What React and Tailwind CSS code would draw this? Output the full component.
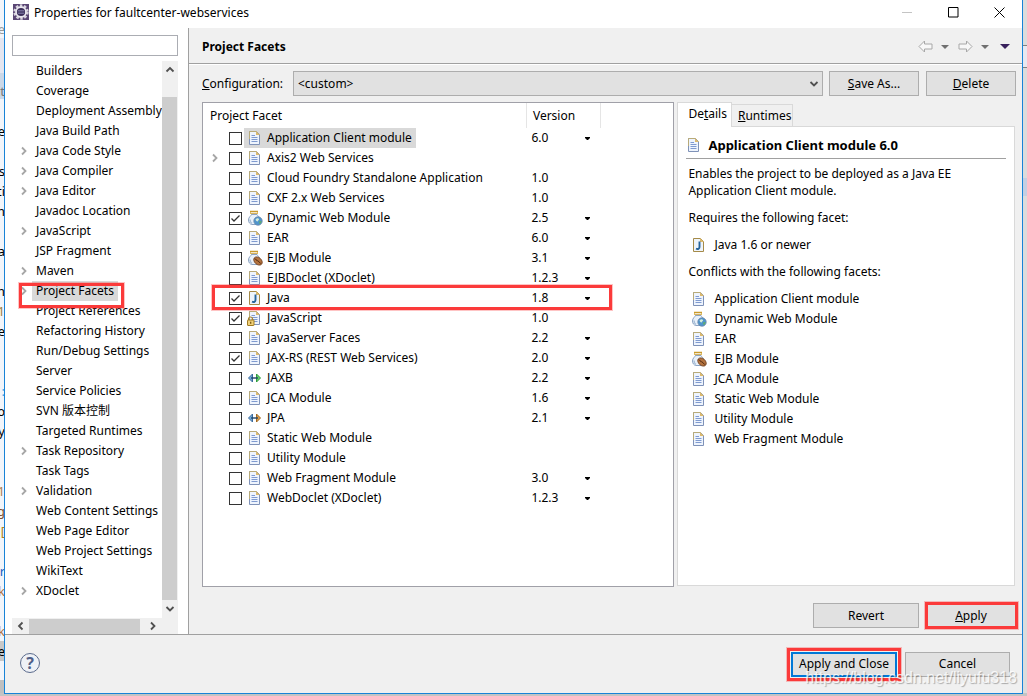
import { useState } from "react";

const PAGES = [
  { name: "Builders" },
  { name: "Coverage" },
  { name: "Deployment Assembly" },
  { name: "Java Build Path" },
  { name: "Java Code Style", children: true },
  { name: "Java Compiler", children: true },
  { name: "Java Editor", children: true },
  { name: "Javadoc Location" },
  { name: "JavaScript", children: true },
  { name: "JSP Fragment" },
  { name: "Maven", children: true },
  { name: "Project Facets", children: true, marked: true },
  { name: "Project References" },
  { name: "Refactoring History" },
  { name: "Run/Debug Settings" },
  { name: "Server" },
  { name: "Service Policies" },
  { name: "SVN 版本控制" },
  { name: "Targeted Runtimes" },
  { name: "Task Repository", children: true },
  { name: "Task Tags" },
  { name: "Validation", children: true },
  { name: "Web Content Settings" },
  { name: "Web Page Editor" },
  { name: "Web Project Settings" },
  { name: "WikiText" },
  { name: "XDoclet", children: true },
];

const FACETS = [
  { name: "Application Client module", version: "6.0", menu: true },
  { name: "Axis2 Web Services", children: true },
  { name: "Cloud Foundry Standalone Application", version: "1.0" },
  { name: "CXF 2.x Web Services", version: "1.0" },
  { name: "Dynamic Web Module", icon: "web", version: "2.5", menu: true, checked: true },
  { name: "EAR", version: "6.0", menu: true },
  { name: "EJB Module", icon: "ejb", version: "3.1", menu: true },
  { name: "EJBDoclet (XDoclet)", version: "1.2.3", menu: true },
  { name: "Java", icon: "java", version: "1.8", menu: true, checked: true, marked: true },
  { name: "JavaScript", icon: "locked", version: "1.0", checked: true },
  { name: "JavaServer Faces", version: "2.2", menu: true },
  { name: "JAX-RS (REST Web Services)", version: "2.0", menu: true, checked: true },
  { name: "JAXB", icon: "jaxb", version: "2.2", menu: true },
  { name: "JCA Module", version: "1.6", menu: true },
  { name: "JPA", icon: "jpa", version: "2.1", menu: true },
  { name: "Static Web Module" },
  { name: "Utility Module" },
  { name: "Web Fragment Module", version: "3.0", menu: true },
  { name: "WebDoclet (XDoclet)", version: "1.2.3", menu: true },
];

const CONFLICTS = [
  { name: "Application Client module" },
  { name: "Dynamic Web Module", icon: "web" },
  { name: "EAR" },
  { name: "EJB Module", icon: "ejb" },
  { name: "JCA Module" },
  { name: "Static Web Module" },
  { name: "Utility Module" },
  { name: "Web Fragment Module" },
];

// Pieces of the editor that show past the left edge of the dialog
const EDITOR_LINES = [
  { top: 21, text: "ce", color: "#999999" },
  { top: 83, text: "ct", color: "#777777" },
  { top: 123, text: "se", color: "#000000" },
  { top: 163, text: "s", color: "#000000" },
  { top: 183, text: "ti", color: "#000000" },
  { top: 203, text: "n", color: "#000000" },
  { top: 243, text: "a", color: "#000000" },
  { top: 283, text: "n", color: "#000000" },
  { top: 303, text: "1", color: "#a08040" },
  { top: 323, text: "e", color: "#000000" },
  { top: 383, text: ":", color: "#3aa0e0" },
  { top: 403, text: "o", color: "#000000" },
  { top: 423, text: "y", color: "#000000" },
  { top: 483, text: "1", color: "#b08050" },
  { top: 503, text: "ig", color: "#805030" },
  { top: 523, text: "[", color: "#b08020" },
  { top: 563, text: "r", color: "#2060c0" },
  { top: 583, text: "k", color: "#b07040" },
  { top: 623, text: "k", color: "#b07040" },
  { top: 643, text: "e", color: "#000000" },
];

function FileShape() {
  return (
    <>
      <path d="M2.5 1.5h7l3 3v10h-10z" fill="#eef4fd" stroke="#7f92b8" />
      <path d="M2.5 9V1.5h7" fill="none" stroke="#b9ab79" />
      <path d="M9 1l4 4H9z" fill="#dcb96c" />
      <path d="M4.5 5.5H8M4.5 7.5h6M4.5 9.5h6M4.5 11.5h6" stroke="#7f9ad0" fill="none" />
    </>
  );
}

function JarShape() {
  return (
    <>
      <path d="M3 1.5h8M4 4h6" stroke="#c99a2c" strokeWidth="1.6" fill="none" />
      <path d="M3.5 2v2M10.5 2v2" stroke="#dcb960" />
      <path d="M4.5 4.5C4 6 1.500 7 1.500 10c0 2.500 1.500 4 3 4.500h5.500c2-1 3-2.500 3-4.500 0-3-2.500-4-3-5.500z" fill="#e9f1fa" stroke="#8ba3c2" />
      <path d="M3 9.500c0 2 .8 3.300 2 4" stroke="#a9bfd8" strokeWidth="1.5" fill="none" />
    </>
  );
}

function FacetIcon({ type = "file" }) {
  return (
    <svg viewBox="0 0 16 16" className="h-4 w-4 shrink-0" aria-hidden="true">
      {type === "file" && <FileShape />}
      {type === "locked" && (
        <>
          <FileShape />
          <path d="M1.500 10.500V9a2 2 0 0 1 4 0v1.500" fill="none" stroke="#a8842c" strokeWidth="1.200" />
          <rect x="0.500" y="10" width="6.500" height="5.500" rx="0.500" fill="#f0d078" stroke="#a07a20" />
          <path d="M3.700 11.800v2" stroke="#705010" strokeWidth="1.200" />
        </>
      )}
      {type === "java" && (
        <>
          <path d="M2.5 1.5h7l3 3v10h-10z" fill="#eef4fb" stroke="#a58a48" />
          <path d="M9 1l4 4H9z" fill="#dcb96c" />
          <path d="M8.5 4.500v5.500c0 1.700-1.500 2.500-3.500 1.700" fill="none" stroke="#25649c" strokeWidth="1.9" />
        </>
      )}
      {type === "web" && (
        <>
          <JarShape />
          <circle cx="11" cy="11" r="4.200" fill="#4f94cc" stroke="#6b86a8" strokeWidth="0.8" />
          <path d="M8.500 9.500c1.500-2 3-1.500 3.500-.5s-1 1-1 2-2 .5-2.500-1.500z" fill="#d4ecd8" />
          <path d="M12 11.500l2.500-.5c0 1.500-.8 2.500-2 3z" fill="#5fae6a" />
        </>
      )}
      {type === "ejb" && (
        <>
          <JarShape />
          <ellipse cx="11" cy="11" rx="4.800" ry="3.400" transform="rotate(42 11 11)" fill="#b4733f" stroke="#6e3d1c" strokeWidth="0.8" />
          <path d="M8 8.500c1 2.500 3.500 1.500 5.500 5" fill="none" stroke="#522a10" />
        </>
      )}
      {(type === "jaxb" || type === "jpa") && (
        <>
          <path d="M5.500 4v8L1.500 8z" fill="#6fa8d8" stroke="#3a6a9c" strokeLinejoin="round" />
          <path
            d="M9.500 4v8l4-4z"
            fill={type === "jaxb" ? "#63d06a" : "#dc9c48"}
            stroke={type === "jaxb" ? "#2f9a3c" : "#a06820"}
            strokeLinejoin="round"
          />
          <path d="M4 8h7" stroke="#1f4468" strokeWidth="1.4" />
        </>
      )}
    </svg>
  );
}

function EclipseIcon() {
  return (
    <svg viewBox="0 0 16 16" className="h-4 w-4" aria-hidden="true">
      <rect width="16" height="16" fill="#5a4674" />
      <circle cx="8" cy="8" r="6.500" fill="none" stroke="#d8d4de" strokeWidth="2.400" strokeDasharray="2.500 1.600" />
      <circle cx="8" cy="8" r="5" fill="#3a2d58" stroke="#e9e6ee" strokeWidth="1.800" />
      <path d="M5 6.500h6M4.500 8h7M5 9.500h6" stroke="#7f78a4" strokeWidth="0.8" />
    </svg>
  );
}

function Chevron({ direction = "right", className = "" }) {
  const paths = {
    right: "M3 1.500L6.500 5L3 8.500",
    left: "M6.500 1.500L3 5L6.500 8.500",
    up: "M1.500 6.500L5 3L8.500 6.500",
    down: "M1.500 3L5 6.500L8.500 3",
  };
  return (
    <svg viewBox="0 0 10 10" className={`h-[10px] w-[10px] shrink-0 stroke-[1.8] ${className}`} aria-hidden="true">
      <path d={paths[direction]} fill="none" stroke="currentColor" />
    </svg>
  );
}

function Caret() {
  return (
    <svg viewBox="0 0 8 4" className="h-1 w-2 text-[#707070]" aria-hidden="true">
      <path d="M0 0h8L4 4z" fill="currentColor" />
    </svg>
  );
}

function NavArrow({ flip }) {
  return (
    <svg viewBox="0 0 15 13" className={`h-[13px] w-[15px] ${flip ? "-scale-x-100" : ""}`} aria-hidden="true">
      <path d="M1 6.500L6.500 1v3H14v5H6.500v3z" fill="#f8f8f8" stroke="#a8a8a8" strokeLinejoin="round" />
    </svg>
  );
}

// Red frame drawn over the thing it points at
function Mark({ className }) {
  return (
    <span className={`pointer-events-none absolute z-10 border-[3px] border-[#fb3a3a] outline outline-[#fb3a3a]/30 ${className}`} />
  );
}

function DialogButton({ children, className = "" }) {
  return (
    <button type="button" className={`h-[25px] border border-[#adadad] bg-[#e1e1e1] whitespace-nowrap ${className}`}>
      {children}
    </button>
  );
}

function PageTree() {
  return (
    <nav className="flex w-[183px] shrink-0 flex-col bg-white pl-[7px] pt-[7px]">
      <input type="text" aria-label="Filter" className="h-[21px] w-[166px] shrink-0 border border-[#abadb3] bg-white px-1 outline-none" />
      <div className="mt-[5px] flex min-h-0 w-[166px] flex-1">
        <ul className="min-w-0 flex-1 overflow-hidden">
          {PAGES.map((page) => (
            <li key={page.name} className="relative flex h-5 items-center">
              <span className="flex w-5 shrink-0 pl-[7px]">
                {page.children && (
                  <button type="button" aria-label={`Expand ${page.name}`} className="text-[#a6a6a6]">
                    <Chevron />
                  </button>
                )}
              </span>
              <a href="#" className={`h-5 px-1 leading-5 whitespace-nowrap ${page.marked ? "bg-[#d9d9d9]" : ""}`}>
                {page.name}
              </a>
              {page.marked && <Mark className="left-[7px] top-0.5 h-[25px] w-[105px]" />}
            </li>
          ))}
        </ul>
        <div className="flex w-4 shrink-0 flex-col items-center bg-[#f0f0f0] text-[#505050]">
          <span className="flex h-9 w-full justify-center pt-1"><Chevron direction="up" /></span>
          <span className="mr-px w-[15px] flex-1 bg-[#cdcdcd]" />
          <span className="flex h-[18px] items-center"><Chevron direction="down" /></span>
        </div>
      </div>
      <div className="flex h-4 w-[166px] shrink-0 items-center bg-[#f0f0f0] pr-5 text-[#505050]">
        <span className="flex w-[17px] justify-center"><Chevron direction="left" /></span>
        <span className="h-[15px] w-[111px] bg-[#cdcdcd]" />
        <span className="flex flex-1 justify-end"><Chevron /></span>
      </div>
    </nav>
  );
}

function FacetTable() {
  const [checked, setChecked] = useState(() =>
    Object.fromEntries(FACETS.map((f) => [f.name, Boolean(f.checked)]))
  );

  return (
    <div className="min-w-0 flex-[471] border border-[#a0a0a8] bg-white">
      <table className="w-full table-fixed border-collapse">
        <colgroup>
          <col />
          <col className="w-[74px]" />
          <col className="w-[73px]" />
        </colgroup>
        <thead>
          <tr className="h-[25px] text-left">
            <th className="border-r border-[#e5e5e5] pl-[7px] font-normal">Project Facet</th>
            <th className="border-r border-[#e5e5e5] pl-1.5 font-normal">Version</th>
            <td />
          </tr>
        </thead>
        <tbody>
          {FACETS.map((facet, i) => (
            <tr key={facet.name} className="h-5">
              <td className="relative p-0">
                <div className="flex h-5 items-center">
                  <span className="flex w-[26px] shrink-0 pl-[7px]">
                    {facet.children && (
                      <button type="button" aria-label={`Expand ${facet.name}`} className="text-[#a6a6a6]">
                        <Chevron />
                      </button>
                    )}
                  </span>
                  <label className="flex h-5 items-center">
                    <span className="relative flex">
                      <input
                        type="checkbox"
                        checked={checked[facet.name]}
                        onChange={() => setChecked({ ...checked, [facet.name]: !checked[facet.name] })}
                        className="h-[13px] w-[13px] appearance-none border border-[#333333] bg-white"
                      />
                      {checked[facet.name] && (
                        <svg viewBox="0 0 13 13" className="pointer-events-none absolute inset-0 h-[13px] w-[13px]" aria-hidden="true">
                          <path d="M2.500 6.500L5 9L10.500 3.500" fill="none" stroke="#333333" strokeWidth="1.3" />
                        </svg>
                      )}
                    </span>
                    <span className={`ml-0.5 flex h-5 items-center gap-1 pl-[3px] pr-1 whitespace-nowrap ${i === 0 ? "bg-[#d9d9d9]" : ""}`}>
                      <FacetIcon type={facet.icon} />
                      {facet.name}
                    </span>
                  </label>
                </div>
                {facet.marked && <Mark className="left-[9px] top-[-3px] h-[25px] w-[400px]" />}
              </td>
              <td className="p-0 pl-[5px]">
                <div className="flex items-center justify-between pr-[10px]">
                  {facet.version}
                  {facet.menu && (
                    <button type="button" aria-label={`${facet.name} version`} className="flex h-4 items-center">
                      <svg viewBox="0 0 5 3" className="h-[3px] w-[5px]" aria-hidden="true">
                        <path d="M0 0h5v1L3 3H2L0 1z" />
                      </svg>
                    </button>
                  )}
                </div>
              </td>
              <td />
            </tr>
          ))}
        </tbody>
      </table>
    </div>
  );
}

function Details() {
  return (
    <section className="flex min-w-0 flex-[338] flex-col pb-px pr-px">
      <div role="tablist" className="flex h-6 items-end">
        <button type="button" role="tab" aria-selected="true" className="relative -mb-px h-[25px] border border-b-0 border-[#d9d9d9] bg-white pl-2.5 pr-1 pb-0.5">
          De<u>t</u>ails
        </button>
        <button type="button" role="tab" aria-selected="false" className="h-[22px] border border-b-0 border-l-0 border-[#d9d9d9] pl-1.5 pr-px">
          <u>R</u>untimes
        </button>
      </div>
      <div className="flex-1 border border-[#d9d9d9] bg-white px-2 pt-1.5">
        <h2 className="flex h-[26px] items-center gap-1.5 border-b border-[#a0a0a0] pb-0.5 pr-1 text-[13px] font-bold">
          <FacetIcon />
          Application Client module 6.0
        </h2>
        <div className="px-0.5 pt-1.5">
          <p className="max-w-[300px] leading-[17px]">
            Enables the project to be deployed as a Java EE Application Client module.
          </p>
          <p className="mt-2.5 leading-[17px]">Requires the following facet:</p>
          <p className="mt-[9px] flex h-5 items-center gap-[7px] pl-[3px]">
            <FacetIcon type="java" />
            Java 1.6 or newer
          </p>
          <p className="mt-2 leading-[17px]">Conflicts with the following facets:</p>
          <ul className="mt-[9px] pl-[3px]">
            {CONFLICTS.map((c) => (
              <li key={c.name} className="flex h-5 items-center gap-[7px]">
                <FacetIcon type={c.icon} />
                {c.name}
              </li>
            ))}
          </ul>
        </div>
      </div>
    </section>
  );
}

function Backdrop() {
  return (
    <div className="absolute inset-0 overflow-hidden bg-[#f2f5fa]" aria-hidden="true">
      <div className="absolute left-0 top-[38px] h-[35px] w-1 bg-[#e4e6f0]" />
      <div className="absolute left-0 top-[73px] h-[26px] w-1 bg-[#cbd8e8]" />
      <div className="absolute left-0 top-[641px] h-5 w-1 bg-[#c8c8c8]" />
      <div className="absolute bottom-0 left-0 h-4 w-1 bg-[#c0c0c0]" />
      {EDITOR_LINES.map((line) => (
        <span
          key={line.top}
          className="absolute left-0 flex w-[5px] justify-end text-[13px] leading-4"
          style={{ top: line.top, color: line.color }}
        >
          {line.text}
        </span>
      ))}
      <div className="absolute inset-y-0 right-0 w-1 bg-[#dcdcdc]" />
      <div className="absolute right-0 top-[45px] h-[23px] w-1 border-y border-[#808080] bg-[#e8e8f0]" />
      <div className="absolute right-0 top-[178px] h-[18px] w-1 bg-[#c5cfe2]" />
      <div className="absolute bottom-0 right-0 h-[3px] w-full bg-[#c4c4c4]" />
    </div>
  );
}

export default function App() {
  return (
    <div className="relative h-screen min-h-[696px] pb-0.5 pl-1 pr-1 font-['Noto_Sans','Noto_Sans_CJK_SC',sans-serif] text-[12px] leading-4 text-black">
      <Backdrop />
      <div className="relative flex h-full flex-col border border-t-0 border-[#1883d7] bg-[#f0f0f0]">
        <header className="flex h-7 shrink-0 items-center bg-white pl-2 pr-[17px]">
          <span className="pb-1"><EclipseIcon /></span>
          <h1 className="ml-[5px] flex-1 pb-0.5">Properties for faultcenter-webservices</h1>
          <div className="flex gap-[35px] pb-1">
            <button type="button" aria-label="Minimize">
              <svg viewBox="0 0 11 11" className="h-[11px] w-[11px]"><path d="M0 5.500h10" stroke="#c4c4c4" /></svg>
            </button>
            <button type="button" aria-label="Maximize">
              <svg viewBox="0 0 11 11" className="h-[11px] w-[11px]"><path d="M.5.5h9.500v9.500H.5z" fill="none" stroke="#000" /></svg>
            </button>
            <button type="button" aria-label="Close">
              <svg viewBox="0 0 11 11" className="h-[11px] w-[11px]"><path d="M.5.5l10 10M10.500.5l-10 10" stroke="#000" /></svg>
            </button>
          </div>
        </header>

        <div className="flex min-h-0 flex-1">
          <PageTree />
          <main className="flex min-w-0 flex-1 flex-col border-l border-[#a0a0a0]">
            <div className="flex h-9 shrink-0 items-center justify-between border-b border-[#a0a0a0] pl-[13px] pr-3 pt-0.5">
              <h2 className="text-[12px] font-bold">Project Facets</h2>
              <div className="flex items-center gap-2">
                <button type="button" aria-label="Back"><NavArrow /></button>
                <button type="button" aria-label="Back history"><Caret /></button>
                <button type="button" aria-label="Forward" className="ml-px"><NavArrow flip /></button>
                <button type="button" aria-label="Forward history"><Caret /></button>
                <button type="button" aria-label="View menu" className="ml-[3px]">
                  <svg viewBox="0 0 10 5" className="h-[5px] w-[10px]"><path d="M0 0h10L5 5z" fill="#38205c" /></svg>
                </button>
              </div>
            </div>

            <div className="flex min-h-0 flex-1 flex-col border-t border-white pb-1.5 pl-[13px] pr-1.5 pt-1.5">
              <div className="flex shrink-0 items-center">
                <label htmlFor="configuration" className="w-[91px] shrink-0"><u>C</u>onfiguration:</label>
                <div className="relative min-w-0 flex-1">
                  <select id="configuration" className="h-[25px] w-full appearance-none border border-[#adadad] bg-[#e1e1e1] pl-1">
                    <option>&lt;custom&gt;</option>
                  </select>
                  <Chevron direction="down" className="pointer-events-none absolute right-1 top-2 stroke-[1.2] text-[#505050]" />
                </div>
                <DialogButton className="ml-1.5 w-[90px]"><u>S</u>ave As...</DialogButton>
                <DialogButton className="ml-[7px] w-[90px]"><u>D</u>elete</DialogButton>
              </div>

              <div className="mt-1.5 flex min-h-0 flex-1 gap-[3px]">
                <FacetTable />
                <Details />
              </div>

              <div className="mt-4 flex shrink-0 justify-end gap-[7px]">
                <DialogButton className="w-[106px]">Revert</DialogButton>
                <div className="relative">
                  <DialogButton className="w-[90px]"><u>A</u>pply</DialogButton>
                  <Mark className="-inset-y-px -left-px -right-0.5" />
                </div>
              </div>
            </div>
          </main>
        </div>

        <footer className="flex h-[59px] shrink-0 items-center border-t border-[#a0a0a0] pl-[15px] pr-3">
          <button type="button" aria-label="Help" className="mb-0.5 flex h-5 w-5 items-center justify-center rounded-full border border-[#5b6b8c] bg-[#eef1f6] text-base font-bold text-[#4f6088]">
            ?
          </button>
          <div className="flex flex-1 justify-end gap-2">
            <div className="relative">
              <DialogButton className="w-[106px] outline-2 outline-[#0078d7] -outline-offset-2">Apply and Close</DialogButton>
              <Mark className="-inset-x-1 -inset-y-1" />
            </div>
            <DialogButton className="w-[105px]">Cancel</DialogButton>
          </div>
        </footer>
      </div>
      <p className="pointer-events-none absolute bottom-2 right-2.5 z-20 font-['Liberation_Sans',sans-serif] text-base leading-5 text-white/80 [text-shadow:1px_1px_1px_rgba(0,0,0,0.3)]">
        https://blog.csdn.net/liyufu318
      </p>
    </div>
  );
}
